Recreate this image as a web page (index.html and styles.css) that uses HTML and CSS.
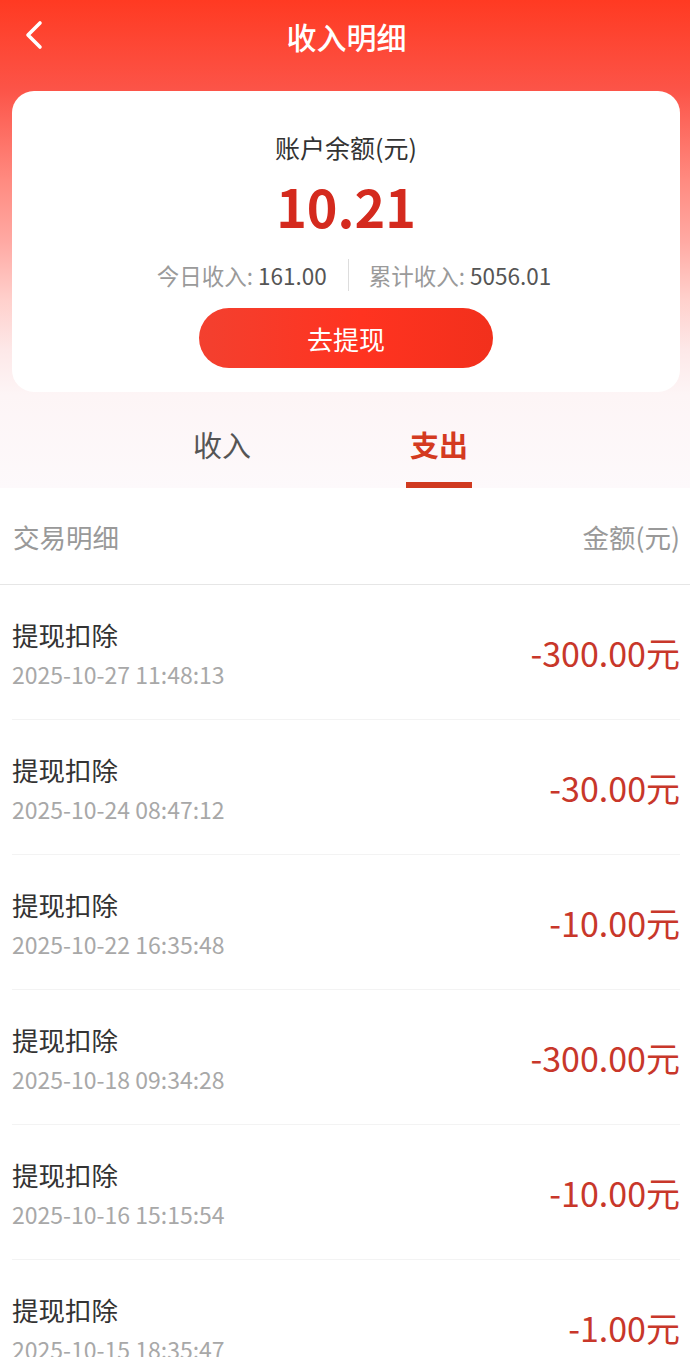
FILE: index.html
```html
<!DOCTYPE html>
<html lang="zh">
<head>
<meta charset="utf-8">
<link rel="stylesheet" href="styles.css">
</head>
<body>
<div class="top">
  <div class="nav">
    <svg class="back" width="22" height="30" viewBox="0 0 22 30"><path d="M17 3 L5 15 L17 27" fill="none" stroke="#fff" stroke-width="3.6" stroke-linecap="round" stroke-linejoin="round"/></svg>
    <div class="nav-title">收入明细</div>
  </div>
  <div class="card">
    <div class="bal-label">账户余额(元)</div>
    <div class="bal">10.21</div>
    <div class="stats">
      <div class="stat"><span class="k">今日收入:</span> <span class="v">161.00</span></div>
      <div class="sep"></div>
      <div class="stat"><span class="k">累计收入:</span> <span class="v">5056.01</span></div>
    </div>
    <div class="btn">去提现</div>
  </div>
  <div class="tabs">
    <div class="tab">收入</div>
    <div class="tab active">支出</div>
  </div>
</div>
<div class="list-head">
  <span>交易明细</span>
  <span>金额(元)</span>
</div>
<div class="list">
  <div class="row"><div class="info"><div class="t">提现扣除</div><div class="d">2025-10-27 11:48:13</div></div><div class="amt">-300.00元</div></div>
  <div class="row"><div class="info"><div class="t">提现扣除</div><div class="d">2025-10-24 08:47:12</div></div><div class="amt">-30.00元</div></div>
  <div class="row"><div class="info"><div class="t">提现扣除</div><div class="d">2025-10-22 16:35:48</div></div><div class="amt">-10.00元</div></div>
  <div class="row"><div class="info"><div class="t">提现扣除</div><div class="d">2025-10-18 09:34:28</div></div><div class="amt">-300.00元</div></div>
  <div class="row"><div class="info"><div class="t">提现扣除</div><div class="d">2025-10-16 15:15:54</div></div><div class="amt">-10.00元</div></div>
  <div class="row"><div class="info"><div class="t">提现扣除</div><div class="d">2025-10-15 18:35:47</div></div><div class="amt">-1.00元</div></div>
</div>
</body>
</html>
```

FILE: styles.css
```css
* { box-sizing: border-box; }
html, body { margin: 0; padding: 0; }
body {
  width: 690px;
  font-family: "Noto Sans CJK SC", "Noto Sans", sans-serif;
  background: #fff;
  overflow: hidden;
}
.top {
  background: linear-gradient(180deg, #ff3a22 0px, #fc5448 90px, #ff8a80 180px, #ffa8a2 240px, #ffd0cc 300px, #fde8e8 350px, #fdf5f6 395px, #fdf9fb 488px);
}
.nav {
  height: 74px;
  display: flex;
  align-items: center;
  justify-content: center;
  position: relative;
}
.back { position: absolute; left: 23px; top: 20px; }
.nav-title {
  color: #fff;
  font-size: 30px;
  font-weight: 500;
  margin-top: -2px;
  margin-left: 3px;
}
.card {
  margin: 17px 10px 0 12px;
  height: 301px;
  background: #fff;
  border-radius: 22px;
  display: flex;
  flex-direction: column;
  align-items: center;
}
.bal-label {
  margin-top: 38px;
  font-size: 25px;
  line-height: 36px;
  color: #333;
}
.bal {
  margin-top: 10px;
  font-size: 52px;
  line-height: 62px;
  font-weight: 700;
  color: #d42a1e;
}
.stats {
  margin-top: 22px;
  margin-left: 16px;
  display: flex;
  align-items: center;
  font-size: 22.5px;
  line-height: 30px;
}
.stat .k { color: #9a9a9a; }
.stat .v { color: #555; }
.sep {
  width: 1px;
  height: 32px;
  background: #ddd;
  margin: 0 20px 0 21px;
}
.btn {
  margin-top: 17px;
  width: 294px;
  height: 60px;
  border-radius: 30px;
  background: linear-gradient(90deg, #f3402f 0%, #ff3320 55%, #f2301c 100%);
  color: #fff;
  font-size: 26px;
  display: flex;
  align-items: center;
  justify-content: center;
}
.tabs {
  height: 96px;
  display: flex;
  justify-content: center;
  gap: 159px;
  padding-right: 29px;
}
.tab {
  position: relative;
  font-size: 29px;
  line-height: 40px;
  padding-top: 32px;
  color: #555;
}
.tab.active {
  color: #d43a20;
  font-weight: 700;
}
.tab.active::after {
  content: "";
  position: absolute;
  left: -4px;
  right: -4px;
  top: 90px;
  height: 6px;
  background: #d03a20;
}
.list-head {
  height: 97px;
  display: flex;
  justify-content: space-between;
  align-items: center;
  padding: 0 10px 0 13px;
  font-size: 26.5px;
  color: #999;
  border-bottom: 1px solid #e6e6e6;
}
.row {
  height: 135px;
  margin: 0 10px 0 12px;
  display: flex;
  justify-content: space-between;
  align-items: center;
  border-bottom: 1px solid #f3f3f3;
}
.info { display: flex; flex-direction: column; margin-top: 6px; }
.t {
  font-size: 26.5px;
  line-height: 38px;
  color: #333;
}
.d {
  font-size: 23px;
  line-height: 40px;
  color: #a8a8a8;
}
.amt {
  font-size: 34px;
  color: #c8372a;
}
```
